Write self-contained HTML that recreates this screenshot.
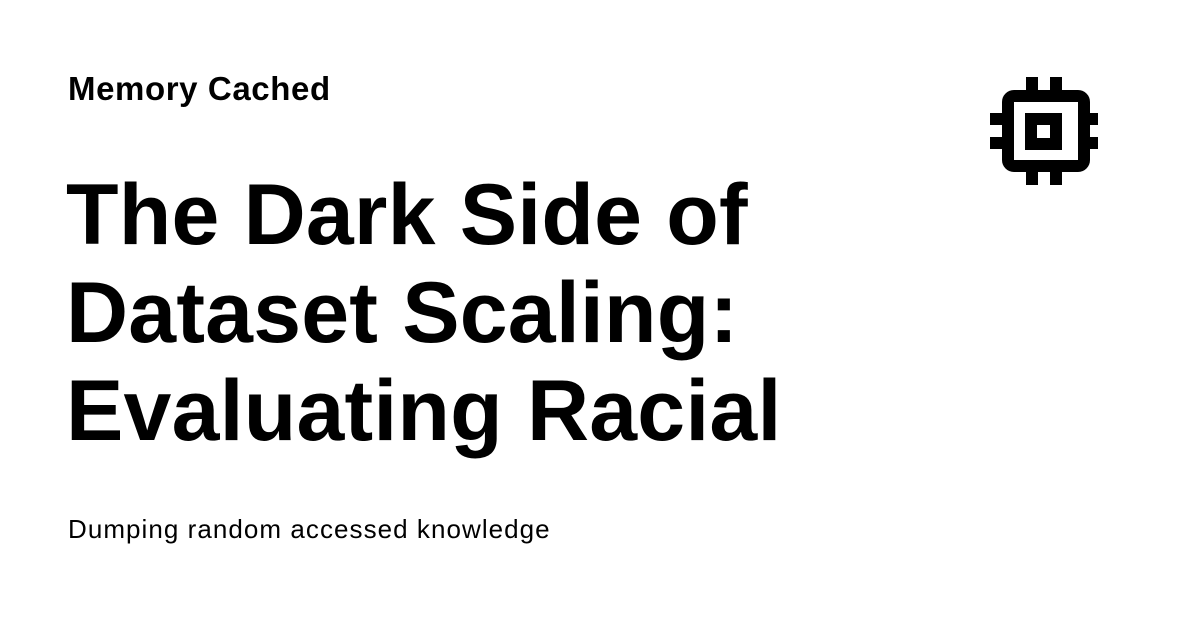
<!DOCTYPE html>
<html><head><style>
body{margin:0;width:1200px;height:630px;background:#fff;overflow:hidden;font-family:"Liberation Sans",sans-serif;color:#000;position:relative}
.s{position:absolute;left:68px;top:70px;font-size:33px;font-weight:bold;letter-spacing:0.6px}
.t{position:absolute;left:66px;top:166px;font-size:86px;font-weight:bold;line-height:98px;letter-spacing:0.2px;width:900px}
.d{position:absolute;left:68px;top:514px;font-size:26px;letter-spacing:1.05px}
svg{position:absolute;left:0;top:0}
</style></head><body>
<div class="s">Memory Cached</div>
<div class="t">The Dark Side of<br>Dataset Scaling:<br>Evaluating Racial</div>
<div class="d">Dumping random accessed knowledge</div>
<svg width="1200" height="630">
<rect x="1008" y="96" width="76" height="70" rx="6" fill="none" stroke="#000" stroke-width="12"/>
<path d="M1025 113h37v37h-37zM1037 125v13h13v-13z" fill="#000" fill-rule="evenodd"/>
<rect x="1026" y="77" width="12" height="14"/><rect x="1050" y="77" width="12" height="14"/>
<rect x="1026" y="171" width="12" height="14"/><rect x="1050" y="171" width="12" height="14"/>
<rect x="990" y="113" width="14" height="12"/><rect x="990" y="137" width="14" height="12"/>
<rect x="1088" y="113" width="10" height="12"/><rect x="1088" y="137" width="10" height="12"/>
</svg>
</body></html>
